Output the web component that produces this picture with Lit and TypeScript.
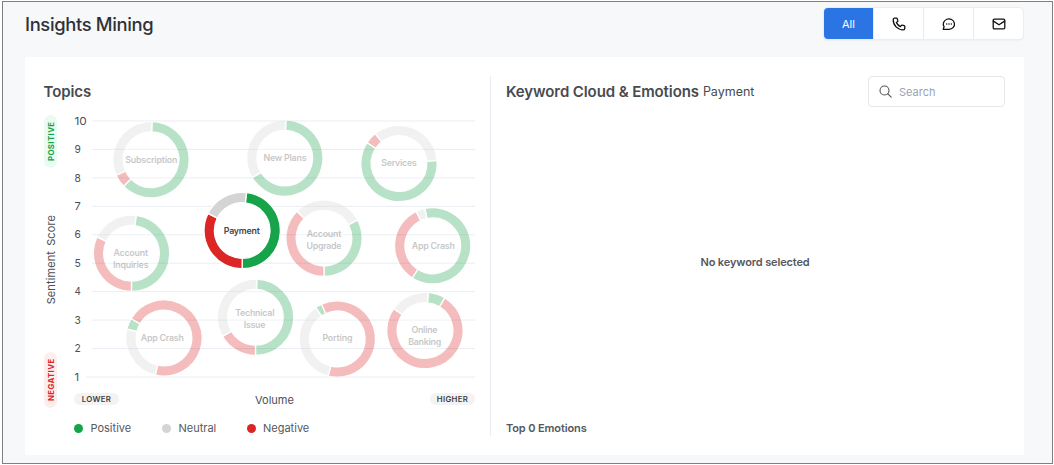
import { LitElement, html, svg, css } from "lit";
import { customElement, property } from "lit/decorators.js";

type Tone = "positive" | "neutral" | "negative";

interface Topic {
  cx: number;
  cy: number;
  lines: { text: string; width: number; y: number; x: number }[];
  segments: { tone: Tone; from: number; to: number }[];
  active?: boolean;
}

const seg = (tone: Tone, from: number, to: number) => ({ tone, from, to });
const line = (text: string, x: number, y: number, width: number) => ({ text, x, y, width });

const TOPICS: Topic[] = [
  { cx: 151, cy: 159.7, lines: [line("Subscription", 151.3, 163.2, 52)],
    segments: [seg("positive", 1.5, 226), seg("negative", 226, 246), seg("neutral", 246, 361.5)] },
  { cx: 284.8, cy: 158.1, lines: [line("New Plans", 285, 161.4, 43)],
    segments: [seg("positive", 1.5, 239), seg("neutral", 239, 361.5)] },
  { cx: 399, cy: 163.5, lines: [line("Services", 399, 166.2, 35.6)],
    segments: [seg("positive", 85.3, 303.3), seg("negative", 303.3, 321.5), seg("neutral", 321.5, 445.3)] },
  { cx: 131.5, cy: 253.3, lines: [line("Account", 130.7, 256.2, 34.6), line("Inquiries", 130.7, 268.3, 35.6)],
    segments: [seg("positive", 7, 180), seg("negative", 180, 295.5), seg("neutral", 295.5, 367)] },
  { cx: 324, cy: 238.2, lines: [line("Account", 324, 237, 34.6), line("Upgrade", 324, 249.2, 35)],
    segments: [seg("positive", 61.5, 180), seg("negative", 180, 315), seg("neutral", 315, 421.5)] },
  { cx: 432.7, cy: 245.8, lines: [line("App Crash", 433.3, 249.2, 43)],
    segments: [seg("positive", 348, 572.5), seg("negative", 212.5, 334.4), seg("neutral", 334.4, 348)] },
  { cx: 164, cy: 338, lines: [line("App Crash", 162.3, 340.7, 43)],
    segments: [seg("positive", 283.4, 300.5), seg("negative", 300.5, 553.2), seg("neutral", 193.2, 283.4)] },
  { cx: 255.5, cy: 317.3, lines: [line("Technical", 254.8, 316, 39.3), line("Issue", 254.6, 328.2, 21.6)],
    segments: [seg("positive", 2, 180), seg("negative", 180, 240), seg("neutral", 240, 362)] },
  { cx: 337.3, cy: 339, lines: [line("Porting", 337.4, 341.4, 30)],
    segments: [seg("positive", 325.5, 335.7), seg("negative", 335.7, 553.8), seg("neutral", 193.8, 325.5)] },
  { cx: 425, cy: 330.5, lines: [line("Online", 424.5, 333, 26), line("Banking", 424.7, 345.2, 33)],
    segments: [seg("positive", 5, 31.5), seg("negative", 31.5, 304.9), seg("neutral", 304.9, 365)] },
  { cx: 242.2, cy: 230.5, active: true, lines: [line("Payment", 241.8, 234.2, 36)],
    segments: [seg("positive", 6.5, 180), seg("negative", 180, 296.6), seg("neutral", 296.6, 366.5)] },
];

const OUTER = 38.2;
const INNER = 27.8;
const TOP_LINE = 120.95;
const STEP = 28.45;

function arc(cx: number, cy: number, from: number, to: number): string {
  const at = (deg: number, r: number) => {
    const a = (deg * Math.PI) / 180;
    return `${(cx + r * Math.sin(a)).toFixed(2)} ${(cy - r * Math.cos(a)).toFixed(2)}`;
  };
  const large = to - from > 180 ? 1 : 0;
  return `M${at(from, OUTER)}A${OUTER} ${OUTER} 0 ${large} 1 ${at(to, OUTER)}L${at(to, INNER)}A${INNER} ${INNER} 0 ${large} 0 ${at(from, INNER)}Z`;
}

@customElement("topic-chart")
export class TopicChart extends LitElement {
  static styles = css`
    :host { display: block; }
    svg { display: block; width: 414px; height: 275px; }
    text { font-family: Inter, sans-serif; }
    .tick { font-size: 11px; fill: #4b5058; }
    .grid { stroke: #e9edf3; stroke-width: 1; }
    .topic { opacity: 0.3; }
    .topic.active { opacity: 1; }
    .disc { fill: #fff; }
    .label { font-size: 8.8px; font-weight: 600; fill: #474747; text-anchor: middle; }
    .positive { fill: #16a34a; }
    .neutral { fill: #d4d4d4; }
    .negative { fill: #dc2626; }
    .arc { stroke: #fff; stroke-width: 1.3; }
  `;

  render() {
    const ticks = [10, 9, 8, 7, 6, 5, 4, 3, 2, 1];
    return html`<svg viewBox="66 110 414 275">
      ${ticks.map((n, i) => {
        const y = TOP_LINE + i * STEP;
        return svg`<line class="grid" x1=${n === 1 ? 86 : 92} x2="475" y1=${y} y2=${y}></line>
          <text class="tick" x="74.5" y=${y + 3.7} textLength=${n === 10 ? 12.3 : n === 1 ? 4.6 : 6.3} lengthAdjust="spacingAndGlyphs">${n}</text>`;
      })}
      ${TOPICS.map((t) => svg`<g class=${t.active ? "topic active" : "topic"}>
        <circle class="disc" cx=${t.cx} cy=${t.cy} r="38"></circle>
        ${t.segments.map((s) => svg`<path class="arc ${s.tone}" d=${arc(t.cx, t.cy, s.from, s.to)}></path>`)}
        ${t.lines.map((l) => svg`<text class="label" x=${l.x} y=${l.y} textLength=${l.width}>${l.text}</text>`)}
      </g>`)}
    </svg>`;
  }
}

@customElement("channel-filter")
export class ChannelFilter extends LitElement {
  static styles = css`
    :host { display: block; margin-right: 1px; }
    .group { display: flex; width: 199px; height: 31px; border-radius: 4px; background: #fff; overflow: hidden;
      box-shadow: 0 0 0 1px #ebedf1, 0 1px 2px rgba(0, 0, 0, 0.1); }
    .item { box-sizing: border-box; width: 50px; display: flex; align-items: center; justify-content: center; border-left: 1px solid #e9ebef; color: #111; }
    .item:first-child { width: 49px; background: #2b74e4; color: #fff; border-left: 0; font-size: 11px; }
    svg { width: 14px; height: 14px; fill: none; stroke: currentColor; stroke-width: 1.3; stroke-linecap: round; stroke-linejoin: round; }
    .dots { fill: currentColor; stroke: none; }
  `;

  render() {
    return html`<div class="group">
      <div class="item">All</div>
      <div class="item"><svg viewBox="0 0 14 14"><path d="M2.6 1.2H4.4Q5.1 1.2 5.3 1.9L5.8 3.8Q5.9 4.4 5.4 4.8L4.4 5.6Q5.8 8.3 8.4 9.6L9.2 8.6Q9.6 8.1 10.2 8.2L12.1 8.7Q12.8 8.9 12.8 9.6V11.4Q12.8 12.8 11.2 12.8C5.6 12.8 1.2 8.4 1.2 2.8Q1.2 1.2 2.6 1.2Z"/></svg></div>
      <div class="item"><svg viewBox="0 0 14 14"><path d="M1.2 12.3L2.1 9.8A5.6 5.2 0 1 1 7 12.3Z"/><g class="dots"><circle cx="4.7" cy="7" r=".75"/><circle cx="7" cy="7" r=".75"/><circle cx="9.3" cy="7" r=".75"/></g></svg></div>
      <div class="item"><svg viewBox="0 0 14 14"><rect x="1.2" y="2.2" width="11.6" height="9.6" rx="1.2"/><path d="M1.4 4.1L7 7.8L12.6 4.1"/></svg></div>
    </div>`;
  }
}

@customElement("app-root")
export class AppRoot extends LitElement {
  @property() topic = "Payment";

  static styles = css`
    :host { display: block; font-family: Inter, sans-serif; background: #fff; }
    * { box-sizing: border-box; }
    .page { height: 465px; padding: 1px 1px 1px 2px; }
    .frame { height: 463px; border: 1px solid #808080; background: #f7f8fa; padding: 0 28px 0 22px; }
    .header { display: flex; justify-content: space-between; align-items: flex-start; height: 55px; padding-top: 6px; }
    h1 { margin: 0; font-size: 18.4px; line-height: 32px; font-weight: 500; color: #2f3136; letter-spacing: -0.35px; }
    .card { display: flex; height: 398px; background: #fff; padding: 19px 19px 0 19px; }
    .topics { width: 447px; height: 360px; border-right: 1px solid #e9edf3; }
    h2 { margin: 0; font-size: 15px; line-height: 31px; font-weight: 600; color: #474b50; letter-spacing: -0.1px; white-space: nowrap; }
    .topics h2 { padding-top: 1px; line-height: 30px; margin-left: -0.5px; }
    .chart { display: flex; height: 303px; margin-top: 3px; }
    .rail { width: 22.5px; margin-left: -0.5px; padding: 5px 0; display: flex; flex-direction: column; align-items: flex-start; justify-content: space-between; }
    .rail > * { writing-mode: vertical-rl; transform: rotate(180deg); width: 13px; line-height: 13px; text-align: center; white-space: nowrap; }
    .pill { border-radius: 7px; font-size: 7.8px; font-weight: 600; letter-spacing: 0.35px; }
    .good, .bad { font-weight: 700; letter-spacing: 0.4px; padding-right: 0.5px; }
    .good { height: 53px; color: #16a34a; background: #ecfbf1; }
    .bad { height: 56px; color: #dc2626; background: #fdeeee; }
    .score { font-size: 11px; color: #4b5058; word-spacing: 2px; letter-spacing: 0.1px; margin-left: 1.5px; }
    .range { display: flex; align-items: center; justify-content: space-between; height: 28px; padding: 0 5px 0 8px; font-size: 11px; color: #4b5058; }
    .range .pill { height: 12px; line-height: 12px; background: #f3f3f3; color: #3d3d3d; text-align: center; width: 45px; }
    .axis { padding-top: 2px; }
    .legend { display: flex; align-items: center; height: 30px; padding-left: 30px; font-size: 11px; color: #55585e; }
    .key { display: flex; align-items: center; gap: 7.5px; }
    .key:nth-child(1) { width: 88px; }
    .key:nth-child(2) { width: 84.5px; }
    .dot { width: 9px; height: 9px; border-radius: 50%; }
    .keywords { flex: 1; height: 360px; padding-left: 15px; display: flex; flex-direction: column; }
    .bar { display: flex; align-items: center; justify-content: space-between; height: 31px; }
    .heading { display: flex; align-items: center; gap: 4px; }
    .subject { font-size: 12.5px; color: #474b50; }
    .search { display: flex; align-items: center; gap: 7px; width: 137px; height: 31px; border: 1px solid #e5e7eb; border-radius: 4px; padding-left: 10px; font-size: 11px; color: #9ca3b4; }
    .search svg { width: 13px; height: 13px; fill: none; stroke: #555; stroke-width: 1.1; stroke-linecap: round; }
    .empty { flex: 1; display: flex; align-items: center; justify-content: center; font-size: 11px; font-weight: 600; color: #55585e; letter-spacing: -0.13px; padding-bottom: 4px; padding-right: 1px; }
    .emotions { height: 15px; line-height: 15px; font-size: 11px; font-weight: 600; color: #55585e; letter-spacing: -0.12px; }
  `;

  render() {
    return html`<div class="page"><div class="frame">
      <div class="header"><h1>Insights Mining</h1><channel-filter></channel-filter></div>
      <div class="card">
        <section class="topics">
          <h2>Topics</h2>
          <div class="chart">
            <div class="rail">
              <span class="pill good">POSITIVE</span>
              <span class="score">Sentiment Score</span>
              <span class="pill bad">NEGATIVE</span>
            </div>
            <div>
              <topic-chart></topic-chart>
              <div class="range"><span class="pill">LOWER</span><span class="axis">Volume</span><span class="pill">HIGHER</span></div>
            </div>
          </div>
          <div class="legend">
            ${[["Positive", "#16a34a"], ["Neutral", "#d4d4d4"], ["Negative", "#dc2626"]].map(
              ([name, color]) => html`<div class="key"><span class="dot" style="background:${color}"></span>${name}</div>`,
            )}
          </div>
        </section>
        <section class="keywords">
          <div class="bar">
            <div class="heading"><h2>Keyword Cloud &amp; Emotions</h2><span class="subject">${this.topic}</span></div>
            <div class="search"><svg viewBox="0 0 13 13"><circle cx="5.5" cy="5.5" r="4.5"/><path d="M8.8 8.8L12.2 12.2"/></svg>Search</div>
          </div>
          <div class="empty">No keyword selected</div>
          <div class="emotions">Top 0 Emotions</div>
        </section>
      </div>
    </div></div>`;
  }
}
